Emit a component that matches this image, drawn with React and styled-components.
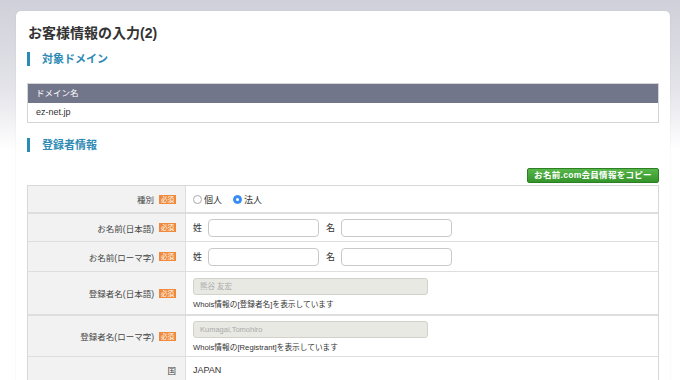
import React from 'react';
import styled, { createGlobalStyle } from 'styled-components';

const GlobalStyle = createGlobalStyle`
  body {
    margin: 0;
    background: linear-gradient(#cfd0d9 0, #e4e4ea 90px, #ffffff 150px);
    font-family: "Liberation Sans", "Noto Sans CJK JP", sans-serif;
    color: #333;
  }
`;

const Page = styled.div`
  padding: 11px 10px 0 16px;
`;

const Card = styled.div`
  background: #fff;
  border-radius: 5px;
  box-shadow: 0 0 2px rgba(0, 0, 0, 0.08);
  padding: 13px 11px 0 11px;
  height: 400px;
`;

const Title = styled.h1`
  margin: 0 0 0 1px;
  font-size: 14px;
  line-height: 18px;
  font-weight: bold;
  color: #333;
`;

const SectionHead = styled.h2`
  margin: ${p => p.$top}px 0 0 0;
  border-left: 3px solid #2a8bb7;
  padding-left: 12px;
  height: 14px;
  line-height: 14px;
  font-size: 11px;
  font-weight: bold;
  color: #2f8bb5;
`;

const DomainTable = styled.div`
  margin-top: 17px;
  border: 1px solid #d4d4d4;
`;

const DomainHead = styled.div`
  background: #72768a;
  color: #fff;
  font-size: 8.5px;
  height: 19px;
  line-height: 19px;
  padding-left: 8px;
`;

const DomainCell = styled.div`
  font-size: 9px;
  height: 19px;
  line-height: 19px;
  padding-left: 8px;
  color: #333;
`;

const ButtonBar = styled.div`
  display: flex;
  justify-content: flex-end;
  margin-top: 16px;
`;

const CopyButton = styled.button`
  height: 15px;
  width: 132px;
  padding: 0;
  border: 1px solid #2c7f22;
  border-radius: 2px;
  background: linear-gradient(#58b64a, #34952a);
  color: #fff;
  font-family: inherit;
  font-size: 8.5px;
  font-weight: bold;
  letter-spacing: 0.3px;
  line-height: 13px;
`;

const FormTable = styled.div`
  margin-top: 2px;
  border: 1px solid #d8d8d8;
  border-bottom: none;
`;

const Row = styled.div`
  display: flex;
  height: ${p => p.$h}px;
  border-top: ${p => p.$line || 1}px solid #dedede;
  &:first-child {
    border-top: none;
  }
`;

const Label = styled.div`
  width: 158px;
  flex-shrink: 0;
  background: #f2f2f2;
  border-right: 1px solid #dedede;
  display: flex;
  align-items: center;
  justify-content: flex-end;
  gap: 5px;
  padding-right: 9px;
  box-sizing: border-box;
  font-size: 8.5px;
  color: #444;
`;

const Badge = styled.span`
  background: #f08a3a;
  color: #fff;
  font-size: 6.5px;
  width: 17px;
  height: 9px;
  line-height: 9px;
  text-align: center;
`;

const Value = styled.div`
  flex: 1;
  display: flex;
  flex-direction: ${p => (p.$stack ? 'column' : 'row')};
  align-items: ${p => (p.$stack ? 'flex-start' : 'center')};
  justify-content: ${p => (p.$stack ? 'center' : 'flex-start')};
  padding-left: 7px;
  font-size: 9px;
  color: #333;
`;

const RadioGroup = styled.label`
  display: flex;
  align-items: center;
  margin-right: 11px;
`;

const RadioDot = styled.span`
  width: 9px;
  height: 9px;
  border-radius: 50%;
  box-sizing: border-box;
  margin-right: 2px;
  border: 1px solid ${p => (p.$on ? '#3a8df0' : '#aaa')};
  background: ${p => (p.$on ? '#3a8df0' : '#fff')};
  display: flex;
  align-items: center;
  justify-content: center;
  &::after {
    content: '';
    width: 3px;
    height: 3px;
    border-radius: 50%;
    background: ${p => (p.$on ? '#fff' : 'transparent')};
  }
`;

const NameLabel = styled.span`
  width: ${p => p.$w}px;
`;

const TextInput = styled.div`
  width: 111px;
  height: 18px;
  box-sizing: border-box;
  border: 1px solid #c9c9c9;
  border-radius: 4px;
  background: #fff;
  margin-right: ${p => p.$gap || 0}px;
`;

const ReadOnly = styled.div`
  width: 235px;
  height: 17px;
  box-sizing: border-box;
  border: 1px solid #d2d2ca;
  border-radius: 3px;
  background: #e9e9e3;
  color: #aaa;
  font-size: 7.5px;
  line-height: 15px;
  padding-left: 6px;
  margin-bottom: 3px;
`;

const Note = styled.div`
  font-size: 7.7px;
  color: #333;
`;

const Req = () => <Badge>必須</Badge>;

export default function App() {
  return (
    <>
      <GlobalStyle />
      <Page>
        <Card>
          <Title>お客様情報の入力(2)</Title>
          <SectionHead $top={10}>対象ドメイン</SectionHead>
          <DomainTable>
            <DomainHead>ドメイン名</DomainHead>
            <DomainCell>ez-net.jp</DomainCell>
          </DomainTable>
          <SectionHead $top={15}>登録者情報</SectionHead>
          <ButtonBar>
            <CopyButton>お名前.com会員情報をコピー</CopyButton>
          </ButtonBar>
          <FormTable>
            <Row $h={26}>
              <Label>種別<Req /></Label>
              <Value>
                <RadioGroup><RadioDot />個人</RadioGroup>
                <RadioGroup><RadioDot $on />法人</RadioGroup>
              </Value>
            </Row>
            <Row $h={27} $line={2}>
              <Label>お名前(日本語)<Req /></Label>
              <Value>
                <NameLabel $w={15}>姓</NameLabel>
                <TextInput $gap={7} />
                <NameLabel $w={15}>名</NameLabel>
                <TextInput />
              </Value>
            </Row>
            <Row $h={29}>
              <Label>お名前(ローマ字)<Req /></Label>
              <Value>
                <NameLabel $w={15}>姓</NameLabel>
                <TextInput $gap={7} />
                <NameLabel $w={15}>名</NameLabel>
                <TextInput />
              </Value>
            </Row>
            <Row $h={42}>
              <Label>登録者名(日本語)<Req /></Label>
              <Value $stack>
                <ReadOnly>熊谷 友宏</ReadOnly>
                <Note>Whois情報の[登録者名]を表示しています</Note>
              </Value>
            </Row>
            <Row $h={40} $line={2}>
              <Label>登録者名(ローマ字)<Req /></Label>
              <Value $stack>
                <ReadOnly>Kumagai,Tomohiro</ReadOnly>
                <Note>Whois情報の[Registrant]を表示しています</Note>
              </Value>
            </Row>
            <Row $h={26}>
              <Label>国</Label>
              <Value>JAPAN</Value>
            </Row>
          </FormTable>
        </Card>
      </Page>
    </>
  );
}
